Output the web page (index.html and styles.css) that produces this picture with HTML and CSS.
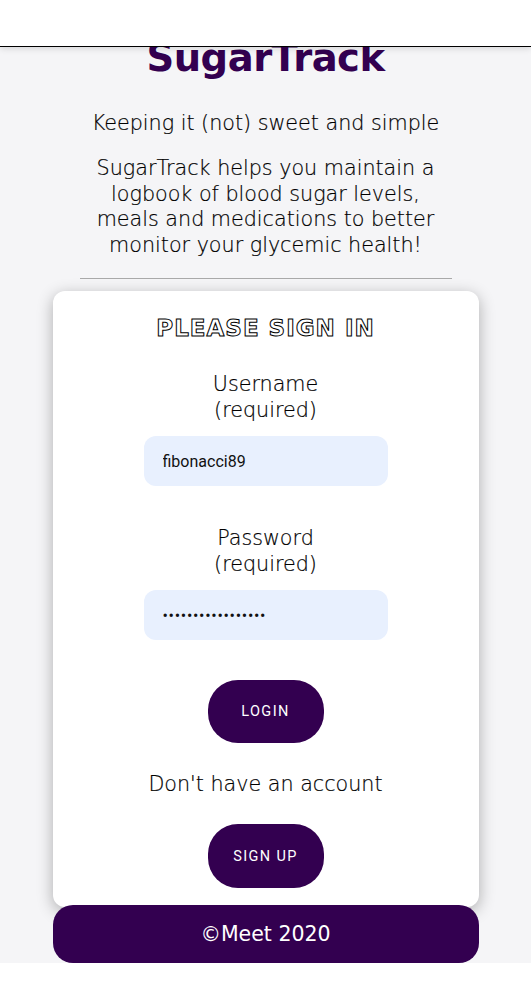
FILE: index.html
```html
<!DOCTYPE html>
<html lang="en">
<head>
<meta charset="utf-8">
<title>SugarTrack</title>
<link rel="stylesheet" href="styles.css">
</head>
<body>
<header class="topbar"></header>
<main class="page">
  <h1 class="title">SugarTrack</h1>
  <p class="tagline">Keeping it (not) sweet and simple</p>
  <p class="intro">SugarTrack helps you maintain a<br>logbook of blood sugar levels,<br>meals and medications to better<br>monitor your glycemic health!</p>
  <hr class="divider">
  <section class="card">
    <h2 class="card-title">PLEASE SIGN IN</h2>
    <label class="field-label" for="user">Username<br>(required)</label>
    <input class="field" id="user" type="text" value="fibonacci89">
    <label class="field-label gap-top" for="pass">Password<br>(required)</label>
    <input class="field password" id="pass" type="password" value="fibonacci89fibona">
    <button class="btn login">LOGIN</button>
    <p class="no-account">Don't have an account</p>
    <button class="btn signup">SIGN UP</button>
  </section>
  <footer class="footer">©Meet 2020</footer>
</main>
</body>
</html>
```

FILE: styles.css
```css
html, body {
  margin: 0;
  padding: 0;
  background: #ffffff;
}
body {
  font-family: "DejaVu Sans", sans-serif;
  color: #000;
}
.topbar {
  position: fixed;
  top: 0;
  left: 0;
  right: 0;
  height: 46px;
  background: #fff;
  border-bottom: 1px solid #000;
  box-shadow: 0 2px 6px rgba(0,0,0,0.12);
  z-index: 10;
}
.page {
  background: #f5f5f7;
  display: flex;
  flex-direction: column;
  align-items: center;
  padding-top: 34px;
}
.title {
  margin: 0;
  font-size: 38.5px;
  line-height: 48px;
  font-weight: 700;
  color: #330050;
  letter-spacing: -0.5px;
}
.tagline,
.intro,
.field-label,
.no-account {
  font-size: 20.7px;
  font-weight: 200;
  color: #000;
  -webkit-text-stroke: 0.2px #000;
}
.tagline {
  margin: 28px 0 0;
  line-height: 26px;
}
.intro {
  margin: 20px 0 0;
  line-height: 25.5px;
  text-align: center;
}
.divider {
  width: 372px;
  margin: 20px 0 0;
  border: 0;
  border-top: 1px solid #aaa;
  height: 0;
}
.card {
  margin-top: 12px;
  width: 426px;
  box-sizing: border-box;
  background: #fff;
  border-radius: 12px;
  box-shadow: 0 4px 16px rgba(0,0,0,0.3);
  display: flex;
  flex-direction: column;
  align-items: center;
  padding: 24px 0 19px;
}
.card-title {
  margin: 0;
  font-size: 23px;
  line-height: 26px;
  font-weight: 700;
  color: #fff;
  -webkit-text-stroke: 1px #000;
  letter-spacing: 1px;
}
.field-label {
  margin-top: 30px;
  line-height: 26px;
  text-align: center;
}
.field-label.gap-top {
  margin-top: 39px;
}
.field {
  margin-top: 13px;
  width: 244px;
  height: 50px;
  box-sizing: border-box;
  border: 0;
  border-radius: 12px;
  background: #e8f0fe;
  padding: 0 19px;
  font-family: Roboto, sans-serif;
  font-size: 16px;
  color: #111;
  outline: none;
}
.password {
  letter-spacing: 0.7px;
}
.btn {
  width: 116px;
  border: 0;
  border-radius: 30px;
  background: #330050;
  color: #fff;
  font-family: Roboto, sans-serif;
  font-size: 14.5px;
  font-weight: 400;
  letter-spacing: 1.4px;
}
.login {
  margin-top: 40px;
  height: 63px;
}
.no-account {
  margin: 28px 0 0;
  line-height: 26px;
}
.signup {
  margin-top: 27px;
  height: 64px;
}
.footer {
  margin-top: -2px;
  width: 426px;
  height: 58px;
  background: #330050;
  border-radius: 20px;
  color: #fff;
  font-size: 20.5px;
  display: flex;
  align-items: center;
  justify-content: center;
  position: relative;
}
```
